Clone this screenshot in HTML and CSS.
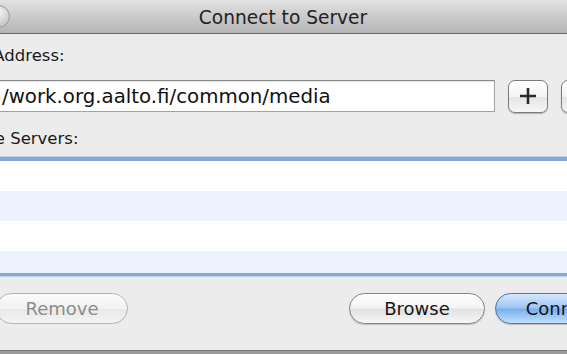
FILE: index.html
```html
<!DOCTYPE html>
<html lang="en">
<head>
    <meta charset="UTF-8">
    <title>Connect to Server</title>
    <link rel="stylesheet" href="styles.css">
</head>
<body>
    <div class="window">
        <div class="titlebar">
            <span class="close-dot"></span>
            <h1>Connect to Server</h1>
        </div>

        <div class="content">
            <p class="label label-address">Server Address:</p>
            <div class="address-row">
                <div class="field"><span>/work.org.aalto.fi/common/media</span></div>
                <button class="square-btn">
                    <svg width="20" height="20" viewBox="0 0 20 20">
                        <path d="M10 2 V18 M2 10 H18" stroke="#2a2a2a" stroke-width="2.6" fill="none"/>
                    </svg>
                </button>
                <button class="square-btn"></button>
            </div>

            <p class="label label-list">Favorite Servers:</p>
        </div>

        <div class="server-list">
            <div class="row"></div>
            <div class="row alt"></div>
            <div class="row"></div>
            <div class="row alt"></div>
        </div>

        <div class="actions">
            <button class="btn btn-remove" disabled>Remove</button>
            <div class="spacer"></div>
            <button class="btn btn-browse">Browse</button>
            <button class="btn btn-connect">Connect</button>
        </div>

        <div class="window-bottom"></div>
    </div>
</body>
</html>
```

FILE: styles.css
```css
* {
    margin: 0;
    padding: 0;
    box-sizing: border-box;
}

body {
    font-family: "DejaVu Sans", "Liberation Sans", sans-serif;
    background: #ececec;
    color: #1e1e1e;
    overflow: hidden;
    width: 567px;
    height: 354px;
}

.window {
    width: 730px;
    margin-left: -82px;
    background: #ececec;
}

/* title bar */
.titlebar {
    position: relative;
    height: 34px;
    background: linear-gradient(#e2e2e2, #cbcbcb 50%, #b6b6b6);
    border-bottom: 1px solid #6a6a6a;
    display: flex;
    align-items: center;
    justify-content: center;
}

.titlebar h1 {
    font-size: 18.6px;
    font-weight: normal;
    color: #222;
    padding-top: 1px;
}

.close-dot {
    position: absolute;
    left: 69px;
    top: 5px;
    width: 23px;
    height: 23px;
    border-radius: 50%;
    background: radial-gradient(circle at 50% 30%, #f4f4f4, #c9c9c9 70%, #b2b2b2);
    border: 1px solid #9a9a9a;
}

.content {
    padding: 0 47px 0 29px;
}

.label {
    font-size: 16.5px;
    line-height: 20px;
    padding-top: 12px;
    height: 46px;
    color: #1a1a1a;
}

.label-address {
    margin-left: -13px;
}

.label-list {
    margin-left: -8px;
    padding-top: 17px;
    height: 45px;
}

.address-row {
    display: flex;
    align-items: center;
    gap: 13px;
    height: 32px;
}

.field {
    flex: 1;
    height: 32px;
    background: #fff;
    border: 1px solid #a2a2a2;
    border-top-color: #8a8a8a;
    box-shadow: inset 0 1px 1px rgba(0, 0, 0, 0.12);
    padding-left: 54px;
    display: flex;
    align-items: center;
    font-size: 19.8px;
    color: #111;
    white-space: nowrap;
}

.square-btn {
    width: 40px;
    height: 33px;
    border: 1px solid #7c7c7c;
    border-radius: 7px;
    background: linear-gradient(#ffffff, #f3f3f3 50%, #e4e4e4 52%, #f7f7f7);
    box-shadow: 0 1px 1px rgba(0, 0, 0, 0.25);
    display: flex;
    align-items: center;
    justify-content: center;
}

/* favourites list */
.server-list {
    margin: 0 20px;
    border-top: 4px solid #87a8d2;
    border-bottom: 3px solid #87a8d2;
    box-shadow: 0 -1px 0 #bcd0ea, 0 1px 0 #bcd0ea;
    height: 119px;
    overflow: hidden;
    background: #fff;
}

.row {
    height: 30px;
    background: #fff;
}

.row.alt {
    background: #edf3fe;
}

/* bottom buttons */
.actions {
    display: flex;
    align-items: flex-start;
    padding: 17px 17px 0 78px;
    height: 74px;
}

.spacer {
    flex: 1;
}

.btn {
    height: 31px;
    border-radius: 16px;
    border: 1px solid #858585;
    background: linear-gradient(#ffffff, #f4f4f4 48%, #e2e2e2 52%, #f6f6f6);
    box-shadow: 0 1px 1px rgba(0, 0, 0, 0.2);
    font-family: "DejaVu Sans", "Liberation Sans", sans-serif;
    font-size: 18px;
    color: #151515;
}

.btn-remove {
    width: 132px;
    color: #8c8c8c;
    border-color: #b4b4b4;
    background: linear-gradient(#fbfbfb, #f2f2f2 50%, #e9e9e9 52%, #f3f3f3);
    box-shadow: none;
}

.btn-browse {
    width: 136px;
    margin-right: 10px;
}

.btn-connect {
    width: 136px;
    border-color: #5275a6;
    background: linear-gradient(#d6e8fc, #9cc5f4 48%, #78b0ef 52%, #bfe0fd);
}

.window-bottom {
    height: 6px;
    border-top: 1px solid #777;
    background: #9a9a9a;
}
```
